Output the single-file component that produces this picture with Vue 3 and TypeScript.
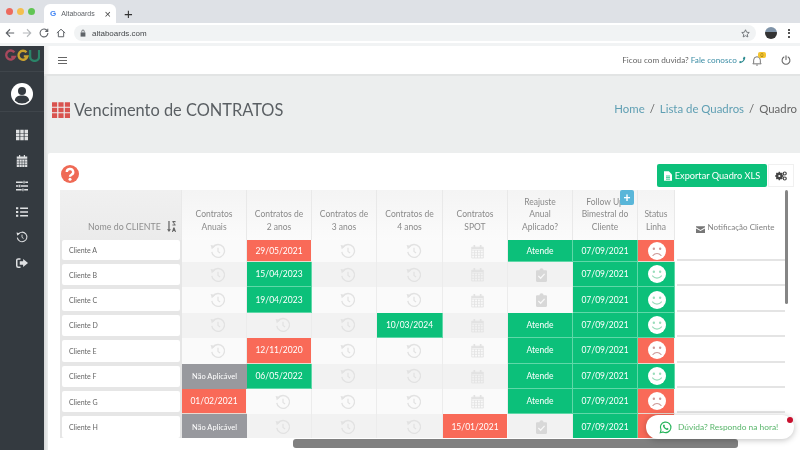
<script setup lang="ts">
type Cell =
  | { kind: 'hist' | 'cal' | 'check' }
  | { kind: 'fill'; tone: 'red' | 'green' | 'grey'; text: string }

interface Row {
  name: string
  cells: Cell[]
  follow: string
  happy: boolean
}

const hist: Cell = { kind: 'hist' }
const cal: Cell = { kind: 'cal' }
const check: Cell = { kind: 'check' }
const red = (text: string): Cell => ({ kind: 'fill', tone: 'red', text })
const green = (text: string): Cell => ({ kind: 'fill', tone: 'green', text })
const grey = (text: string): Cell => ({ kind: 'fill', tone: 'grey', text })
const atende = green('Atende')
const na = grey('Não Aplicável')

const headers = [
  'Contratos Anuais',
  'Contratos de 2 anos',
  'Contratos de 3 anos',
  'Contratos de 4 anos',
  'Contratos SPOT',
  'Reajuste Anual Aplicado?',
  'Follow Up Bimestral do Cliente',
  'Status Linha',
]

const rows: Row[] = [
  { name: 'Cliente A', cells: [hist, red('29/05/2021'), hist, hist, cal, atende], follow: '07/09/2021', happy: false },
  { name: 'Cliente B', cells: [hist, green('15/04/2023'), hist, hist, cal, check], follow: '07/09/2021', happy: true },
  { name: 'Cliente C', cells: [hist, green('19/04/2023'), hist, hist, cal, check], follow: '07/09/2021', happy: true },
  { name: 'Cliente D', cells: [hist, hist, hist, green('10/03/2024'), cal, atende], follow: '07/09/2021', happy: true },
  { name: 'Cliente E', cells: [hist, red('12/11/2020'), hist, hist, cal, atende], follow: '07/09/2021', happy: false },
  { name: 'Cliente F', cells: [na, green('06/05/2022'), hist, hist, cal, atende], follow: '07/09/2021', happy: true },
  { name: 'Cliente G', cells: [red('01/02/2021'), hist, hist, hist, cal, atende], follow: '07/09/2021', happy: false },
  { name: 'Cliente H', cells: [na, hist, hist, hist, red('15/01/2021'), check], follow: '07/09/2021', happy: false },
]

const sideIcons = ['i-grid', 'i-cal', 'i-sliders', 'i-list', 'i-hist', 'i-exit']
</script>

<template>
  <div class="screen">
    <svg class="defs" width="0" height="0" aria-hidden="true">
      <symbol id="i-grid" viewBox="0 0 16 14">
        <path fill="currentColor" d="M0 0h4.600v4.200H0zM5.700 0h4.600v4.200H5.700zM11.400 0H16v4.200h-4.600zM0 4.900h4.600v4.200H0zM5.700 4.900h4.600v4.200H5.700zM11.400 4.900H16v4.200h-4.600zM0 9.800h4.600V14H0zM5.700 9.800h4.600V14H5.700zM11.400 9.800H16V14h-4.600z" />
      </symbol>
      <symbol id="i-cal" viewBox="0 0 14 16">
        <path fill="currentColor" d="M3 0h1.600v2H3zM9.400 0H11v2H9.400zM0 2h14v3H0zM0 6h14v10H0z" />
        <path stroke="#343a40" stroke-width=".7" d="M3.500 6v10M7 6v10M10.500 6v10M0 9.300h14M0 12.600h14" />
      </symbol>
      <symbol id="i-sliders" viewBox="0 0 16 14">
        <path fill="currentColor" d="M0 1h16v2H0zM0 6h16v2H0zM0 11h16v2H0z" />
        <path fill="currentColor" stroke="#343a40" stroke-width=".8" d="M9.500 0h2.400v4H9.500zM3.500 5h2.400v4H3.500zM8 10h2.400v4H8z" />
      </symbol>
      <symbol id="i-list" viewBox="0 0 16 14">
        <path fill="currentColor" d="M5.500 1h10.500v2H5.500zM5.500 6h10.500v2H5.500zM5.500 11h10.500v2H5.500zM0 .6h3v2.800H0zM0 5.600h3v2.800H0zM0 10.600h3v2.800H0z" />
      </symbol>
      <symbol id="i-hist" viewBox="0 0 20 20">
        <path fill="none" stroke="currentColor" stroke-width="1.700" d="M3.500 5.400A8 8 0 1 1 2.200 11" />
        <path fill="currentColor" d="M.8 2.400l6 1.200-4.600 4.200z" />
        <path fill="none" stroke="currentColor" stroke-width="1.500" d="M10 6v4.600l2.600 1.800" />
      </symbol>
      <symbol id="i-exit" viewBox="0 0 16 14">
        <path fill="none" stroke="currentColor" stroke-width="2" d="M6 1.500H3a2 2 0 0 0-2 2v7a2 2 0 0 0 2 2h3" />
        <path fill="currentColor" d="M5 4.700h4.500V1.600L16 7l-6.500 5.400V9.300H5z" />
      </symbol>
      <symbol id="i-calendar-line" viewBox="0 0 18 20">
        <path fill="none" stroke="currentColor" stroke-width="1.200" d="M1 4h16v15H1zM1 8h16M5 8v11M9 8v11M13 8v11M1 11.700h16M1 15.300h16" />
        <path fill="currentColor" d="M3.500 1h2.300v4.500H3.500zM12.200 1h2.300v4.500h-2.300zM1 4h16v2.500H1z" />
      </symbol>
      <symbol id="i-clip" viewBox="0 0 16 20">
        <path fill="currentColor" d="M1.500 3H5a3 3 0 0 1 6 0h3.500A1.500 1.500 0 0 1 16 4.500v14a1.500 1.500 0 0 1-1.500 1.500h-13A1.500 1.500 0 0 1 0 18.500v-14A1.500 1.500 0 0 1 1.500 3z" />
        <path fill="none" stroke="#f8f8f8" stroke-width="1.800" d="M3.500 11.500l3.200 3.200 5.800-6.400" />
      </symbol>
      <symbol id="i-face-happy" viewBox="0 0 20 20">
        <circle cx="10" cy="10" r="10" fill="#fff" />
        <circle cx="6.500" cy="7.500" r="1.300" fill="currentColor" />
        <circle cx="13.500" cy="7.500" r="1.300" fill="currentColor" />
        <path fill="none" stroke="currentColor" stroke-width="1.300" stroke-linecap="round" d="M5 12.200c2.600 3.200 7.400 3.200 10 0" />
      </symbol>
      <symbol id="i-face-sad" viewBox="0 0 20 20">
        <circle cx="10" cy="10" r="10" fill="#fff" />
        <circle cx="6.500" cy="7.500" r="1.300" fill="currentColor" />
        <circle cx="13.500" cy="7.500" r="1.300" fill="currentColor" />
        <path fill="none" stroke="currentColor" stroke-width="1.300" stroke-linecap="round" d="M5.500 15c2.400-3 6.600-3 9 0" />
      </symbol>
    </svg>

    <div class="tabstrip">
      <div class="lights"><i class="l-red"></i><i class="l-yellow"></i><i class="l-green"></i></div>
      <div class="tab">
        <span class="g">G</span>
        <span class="tab-title">Altaboards</span>
        <span class="tab-x">×</span>
      </div>
      <span class="newtab">+</span>
    </div>

    <div class="toolbar">
      <svg class="nav" viewBox="0 0 12 12" width="10" height="10"><path fill="none" stroke="#5f6368" stroke-width="1.300" d="M11 6H2M6 1.500L1.500 6 6 10.500" /></svg>
      <svg class="nav" viewBox="0 0 12 12" width="10" height="10"><path fill="none" stroke="#b5b8bb" stroke-width="1.300" d="M1 6h9M6 1.500L10.500 6 6 10.500" /></svg>
      <svg class="nav" viewBox="0 0 12 12" width="10" height="10"><path fill="none" stroke="#5f6368" stroke-width="1.300" d="M10 3.500A4.700 4.700 0 1 0 10.700 6M10.500 1v3H7.500" /></svg>
      <svg class="nav" viewBox="0 0 12 12" width="10" height="10"><path fill="none" stroke="#5f6368" stroke-width="1.200" d="M1 6l5-4.500L11 6M2.800 5v5.500h6.400V5" /></svg>
      <div class="omnibox">
        <svg viewBox="0 0 10 12" width="6" height="8"><path fill="#5f6368" d="M1 5h8v7H1z" /><path fill="none" stroke="#5f6368" stroke-width="1.400" d="M3 5V3a2 2 0 0 1 4 0v2" /></svg>
        <span class="url">altaboards.com</span>
        <svg class="star" viewBox="0 0 12 12" width="9" height="9"><path fill="none" stroke="#5f6368" stroke-width="1.100" d="M6 1l1.500 3.300 3.500.4-2.600 2.400.7 3.500L6 8.900l-3.100 1.700.7-3.500L1 4.700l3.500-.4z" /></svg>
      </div>
      <div class="profile"></div>
      <div class="kebab"><i></i><i></i><i></i></div>
    </div>

    <div class="app">
      <aside class="sidebar">
        <div class="logo">
          <svg viewBox="0 0 40 14" width="36" height="13" fill="none" stroke-width="2.600">
            <path stroke="#a8485c" d="M11.500 3.500A5 5 0 1 0 12 8.500H8" />
            <path stroke="#c9a22f" d="M25 3.500A5 5 0 1 0 26 8h-4" />
            <path stroke="#2a8468" d="M29 1v7a5 5 0 0 0 10 0V1" />
          </svg>
        </div>
        <div class="avatar">
          <svg viewBox="0 0 22 22" width="22" height="22">
            <circle cx="11" cy="11" r="11" fill="#fff" />
            <circle cx="11" cy="8" r="4" fill="#343a40" />
            <path fill="#343a40" d="M3.800 17.500c.5-3.800 3.300-5 7.200-5s6.700 1.200 7.200 5a10 10 0 0 1-14.400 0z" />
          </svg>
        </div>
        <nav class="side-nav">
          <svg v-for="icon in sideIcons" :key="icon" class="side-icon"><use :href="'#' + icon" /></svg>
        </nav>
      </aside>

      <main class="main">
        <header class="topbar">
          <div class="burger"><i></i><i></i><i></i></div>
          <div class="top-right">
            <span class="ask">Ficou com duvida? <b>Fale conosco</b></span>
            <svg viewBox="0 0 12 12" width="7" height="8"><path fill="#2b8a8f" d="M11 1.500C10 7 7 10 1.500 11.500L0 9l3-1.500 1.200 1.200C5.800 7.800 7 6.500 7.700 5L6.500 3.800 8.500 0z" /></svg>
            <div class="bell">
              <svg viewBox="0 0 12 13" width="10" height="11"><path fill="none" stroke="#777" stroke-width="1.200" d="M2 9.500V6a4 4 0 0 1 8 0v3.500l1 1H1zM5 12h2" /></svg>
              <span class="bell-badge">0</span>
            </div>
            <svg class="power" viewBox="0 0 12 12" width="10" height="10"><path fill="none" stroke="#666" stroke-width="1.300" stroke-linecap="round" d="M3.500 2.500a4.700 4.700 0 1 0 5 0M6 .8v4.700" /></svg>
          </div>
        </header>

        <section class="pagehead">
          <h1>
            <svg class="title-icon"><use href="#i-grid" /></svg>
            Vencimento de CONTRATOS
          </h1>
          <div class="crumbs">
            <a>Home</a><span>/</span><a>Lista de Quadros</a><span>/</span><em>Quadro</em>
          </div>
        </section>

        <section class="content">
          <div class="actions">
            <svg class="help" viewBox="0 0 18 18" width="18" height="18">
              <circle cx="9" cy="9" r="9" fill="#ef6a55" />
              <path fill="none" stroke="#fff" stroke-width="2.400" d="M5.800 7a3.200 3 0 1 1 4.600 2.700C9.400 10.200 9 10.700 9 11.800" />
              <circle cx="9" cy="14.300" r="1.500" fill="#fff" />
            </svg>
            <button class="export">
              <svg viewBox="0 0 10 12" width="8" height="10"><path fill="#fff" d="M0 0h6l4 4v8H0z" /><path stroke="#0cc07a" d="M2.500 6h5M2.500 8h5M2.500 10h5" /></svg>
              Exportar Quadro XLS
            </button>
            <button class="gear">
              <svg viewBox="0 0 14 12" width="12" height="10"><circle cx="5" cy="6" r="3" fill="none" stroke="#444" stroke-width="2.200" /><path stroke="#444" stroke-width="1.600" d="M5 1v10M0 6h10M1.500 2.500l7 7M8.500 2.500l-7 7" /><circle cx="5" cy="6" r="1.300" fill="#fff" /><circle cx="11.500" cy="3" r="1.800" fill="none" stroke="#444" stroke-width="1.400" /><circle cx="11.500" cy="9" r="1.800" fill="none" stroke="#444" stroke-width="1.400" /></svg>
            </button>
          </div>

          <div class="board">
            <div class="grid">
              <div class="th th-name">
                <span>Nome do CLIENTE</span>
                <svg class="sort" viewBox="0 0 10 12" width="9" height="11"><path fill="#666" d="M1.500 0h1.400v9H4.400L2.200 12 0 9h1.500zM6 0h3.500v1.200H7.300L9.600 4v1H6V3.800h2.200L6 1z" /><path fill="#666" d="M7 7h1.400L10 12H8.800l-.3-1H7l-.3 1H5.500z" /></svg>
              </div>
              <div v-for="h in headers" :key="h" class="th">{{ h }}</div>
              <div class="th th-notif">
                <svg viewBox="0 0 12 9" width="9" height="7"><path fill="#777" d="M0 0h12v1.500L6 5 0 1.500zM0 3l6 3.500L12 3v6H0z" /></svg>
                Notificação Cliente
              </div>

              <template v-for="(row, r) in rows" :key="row.name">
                <div class="td td-name" :class="{ first: r === 0 }"><div class="name-card">{{ row.name }}</div></div>
                <div
                  v-for="(c, i) in row.cells"
                  :key="i"
                  class="td"
                  :class="[c.kind === 'fill' ? 'fill ' + c.tone : '', { alt: r % 2 === 1 }]"
                >
                  <template v-if="c.kind === 'fill'">{{ c.text }}</template>
                  <svg v-else-if="c.kind === 'hist'" class="ic ic-hist"><use href="#i-hist" /></svg>
                  <svg v-else-if="c.kind === 'cal'" class="ic ic-cal"><use href="#i-calendar-line" /></svg>
                  <svg v-else class="ic ic-clip"><use href="#i-clip" /></svg>
                </div>
                <div class="td fill green">{{ row.follow }}</div>
                <div class="td fill face" :class="row.happy ? 'green' : 'red'">
                  <svg class="ic-face"><use :href="row.happy ? '#i-face-happy' : '#i-face-sad'" /></svg>
                </div>
                <div class="td td-notif"></div>
              </template>
            </div>
            <button class="plus">+</button>
            <div class="vscroll"></div>
          </div>
          <div class="hscroll"></div>

          <div class="whats">
            <svg viewBox="0 0 16 16" width="13" height="13"><path fill="none" stroke="#25b45a" stroke-width="1.400" d="M1.500 14.500l1-3.500a6.500 6.500 0 1 1 2.500 2.500z" /><path fill="#25b45a" d="M5.500 4.500l1-.3.900 1.900-.6.800c.5 1 1.200 1.700 2.300 2.200l.8-.7 1.900 1-.4 1.100c-.6.500-1.500.6-2.400.2-2.100-.9-3.500-2.400-4.100-4.300-.2-.8 0-1.400.6-1.900z" /></svg>
            <span>Dúvida? Respondo na hora!</span>
            <i class="dot"></i>
          </div>
        </section>
      </main>
    </div>
  </div>
</template>

<style scoped>
.screen {
  position: relative;
  width: 800px;
  height: 450px;
  overflow: hidden;
  display: flex;
  flex-direction: column;
  background: #fff;
  font-family: Lato, "Liberation Sans", sans-serif;
  filter: blur(0.5px);
}
.defs {
  position: absolute;
}

.tabstrip {
  height: 23px;
  flex-shrink: 0;
  background: #dee1e6;
  display: flex;
  align-items: flex-end;
  padding-left: 6px;
}
.lights {
  display: flex;
  gap: 4px;
  align-self: center;
  width: 38px;
  margin-bottom: 1px;
}
.lights i {
  width: 7px;
  height: 7px;
  border-radius: 50%;
}
.l-red { background: #ed6a5e; }
.l-yellow { background: #f4bf4f; }
.l-green { background: #61c554; }
.tab {
  width: 72px;
  height: 19px;
  background: #fff;
  border-radius: 6px 6px 0 0;
  display: flex;
  align-items: center;
  gap: 5px;
  padding: 0 5px;
  box-sizing: border-box;
  font-family: "Liberation Sans", sans-serif;
  font-size: 7px;
  color: #5f6368;
}
.g {
  color: #4285f4;
  font-weight: 700;
  font-size: 8px;
  margin-left: 1px;
}
.tab-title {
  flex: 1;
}
.tab-x {
  font-size: 11px;
  color: #444;
}
.newtab {
  font-family: "Liberation Sans", sans-serif;
  font-size: 15px;
  line-height: 19px;
  margin-left: 8px;
  color: #333;
}

.toolbar {
  height: 20px;
  flex-shrink: 0;
  background: #fff;
  display: flex;
  align-items: center;
  padding-left: 5px;
  border-bottom: 3px solid #f1f3f4;
  gap: 7px;
}
.nav {
  flex-shrink: 0;
}
.omnibox {
  flex: 1;
  height: 16px;
  margin-left: 1px;
  border-radius: 8px;
  background: #f1f3f4;
  display: flex;
  align-items: center;
  padding: 0 3px 0 6px;
  gap: 6px;
}
.url {
  flex: 1;
  font-family: "Liberation Sans", sans-serif;
  font-size: 8px;
  color: #44474a;
}
.star {
  margin-right: 3px;
}
.profile {
  width: 12px;
  height: 12px;
  border-radius: 50%;
  background: linear-gradient(#7f93a8 40%, #333 40%);
  margin-left: 2px;
}
.kebab {
  display: flex;
  flex-direction: column;
  gap: 1.500px;
  margin: 0 10px 0 4px;
}
.kebab i {
  width: 2px;
  height: 2px;
  background: #555;
}

.app {
  flex: 1;
  display: flex;
  min-height: 0;
}
.sidebar {
  width: 44px;
  flex-shrink: 0;
  background: #343a40;
  display: flex;
  flex-direction: column;
  align-items: center;
}
.logo {
  height: 26px;
  width: 100%;
  display: flex;
  align-items: flex-start;
  justify-content: center;
  padding-top: 3px;
  box-sizing: border-box;
  border-bottom: 1px solid #3f454b;
}
.avatar {
  height: 40px;
  width: 100%;
  display: flex;
  align-items: center;
  justify-content: center;
  padding-top: 4px;
  box-sizing: border-box;
  border-bottom: 1px solid #3f454b;
}
.side-nav {
  display: flex;
  flex-direction: column;
  align-items: center;
  gap: 13.500px;
  padding-top: 17px;
  color: #dfe1e3;
}
.side-icon {
  width: 12px;
  height: 12px;
}

.main {
  flex: 1;
  display: flex;
  flex-direction: column;
  min-width: 0;
  background: linear-gradient(90deg, #d6d8d9, #eceeee 4px);
}
.topbar {
  height: 28px;
  flex-shrink: 0;
  background: linear-gradient(90deg, #ececec, #fff 6px);
  display: flex;
  align-items: center;
  padding-left: 14px;
  box-sizing: border-box;
}
.burger {
  display: flex;
  flex-direction: column;
  gap: 2px;
}
.burger i {
  width: 9px;
  height: 1px;
  background: #666;
}
.top-right {
  margin-left: auto;
  display: flex;
  align-items: center;
  gap: 2px;
  padding-right: 9px;
}
.ask {
  font-size: 8.200px;
  color: #666;
}
.ask b {
  font-weight: 400;
  color: #3d8ea6;
}
.bell {
  position: relative;
  display: flex;
  margin: 0 17px 0 4px;
}
.bell-badge {
  position: absolute;
  left: 6px;
  top: -3px;
  width: 8px;
  height: 6px;
  background: #f4c430;
  border-radius: 2px;
  color: #8a6d10;
  font-size: 5px;
  line-height: 6px;
  text-align: center;
}

.pagehead {
  height: 79px;
  flex-shrink: 0;
  display: flex;
  align-items: flex-start;
  justify-content: space-between;
  padding: 22px 3px 0 8px;
  box-sizing: border-box;
  border-top: 2px solid #e2e4e4;
}
h1 {
  margin: 0;
  display: flex;
  align-items: center;
  gap: 4px;
  font-family: Lato, sans-serif;
  font-weight: 400;
  font-size: 16.400px;
  line-height: 24px;
  color: #5a5f63;
}
.title-icon {
  width: 18px;
  height: 16px;
  color: #d9534f;
}
.crumbs {
  display: flex;
  gap: 5px;
  font-family: Lato, sans-serif;
  font-size: 11.400px;
  line-height: 22px;
  color: #666;
}
.crumbs a {
  color: #5f9fb3;
}
.crumbs em {
  font-style: normal;
}

.content {
  position: relative;
  flex: 1;
  min-height: 0;
  margin-left: 4px;
  background: #fff;
  padding: 11px 0 0 12px;
  border-top-left-radius: 2px;
}
.actions {
  display: flex;
  align-items: center;
  height: 23px;
  margin-bottom: 3px;
}
.help {
  margin-left: 1px;
  margin-top: -4px;
}
.export {
  margin-left: auto;
  width: 110px;
  height: 23px;
  border: 0;
  border-radius: 2px;
  background: #0cc07a;
  color: #fff;
  font-family: Lato, sans-serif;
  font-size: 9.200px;
  display: flex;
  align-items: center;
  justify-content: center;
  gap: 3px;
  padding: 0;
}
.gear {
  width: 26px;
  height: 23px;
  margin: 0 6px 0 1px;
  border: 1px solid #f0f0f0;
  background: #fff;
  display: flex;
  align-items: center;
  justify-content: center;
  padding: 0;
}

.board {
  position: relative;
  width: 728px;
  height: 248px;
  overflow: hidden;
}
.grid {
  display: grid;
  grid-template-columns: 122px 65px 65px 65px 66px 65px 65px 65px 37px 110px;
  grid-template-rows: 50px 22px repeat(7, 25.400px);
}
.th {
  background: linear-gradient(#f4f4f4, #fbfbfb);
  border-right: 1px solid #e9e9e9;
  box-sizing: border-box;
  display: flex;
  align-items: flex-end;
  justify-content: center;
  text-align: center;
  padding: 0 6px 7px;
  font-size: 8.500px;
  line-height: 12.500px;
  color: #8a8a8a;
}
.th-name {
  background: linear-gradient(#f0f0f0, #ebebeb);
  justify-content: flex-start;
  padding: 0 5px 7px 28px;
  color: #8e8e8e;
  font-size: 8.800px;
  white-space: nowrap;
}
.sort {
  margin-left: auto;
  margin-bottom: 1px;
}
.th-notif {
  background: #fff;
  border-right: 0;
  gap: 3px;
  padding: 0 0 7px 10px;
  align-items: flex-end;
  color: #808080;
  font-size: 8px;
  white-space: nowrap;
}
.td {
  background: #fafafa;
  box-sizing: border-box;
  border-right: 1px solid #ececec;
  display: flex;
  align-items: center;
  justify-content: center;
  font-size: 8.500px;
  color: #fff;
}
.td.alt {
  background: #f2f2f2;
}
.td.green {
  background: #0cc07a;
  border-right: 1px solid #5fd8a8;
  border-bottom: 1px solid #5fd8a8;
}
.td.red {
  background: #f96a58;
  border-right: 1px solid #f8f8f8;
  border-bottom: 1px solid #e9d9d0;
}
.td.grey {
  background: #98999e;
  border-right: 0;
  font-size: 7.500px;
}
.td-name {
  background: #e6e6e6;
  border-right: 0;
  padding: 2px;
}
.td-name.first {
  padding-top: 0;
}
.name-card {
  width: 100%;
  height: 100%;
  background: #fff;
  border-radius: 2px;
  display: flex;
  align-items: center;
  padding-left: 7px;
  box-sizing: border-box;
  color: #666;
  font-size: 7px;
}
.td-notif {
  background: #fff;
  border-right: 0;
  border-bottom: 2px solid #e4e4e4;
  margin-bottom: 1px;
  margin-left: 2px;
}
.ic {
  color: #e2e2e2;
}
.ic-hist {
  width: 16px;
  height: 16px;
  margin-left: 8px;
}
.ic-cal {
  width: 13px;
  height: 15px;
  margin-left: 4px;
}
.ic-clip {
  width: 11px;
  height: 14px;
  margin-left: 2px;
  color: #d8d8d8;
}
.ic-face {
  width: 18px;
  height: 18px;
  margin-left: 2px;
  color: #9db;
}
.face.red .ic-face {
  color: #c99;
}
.plus {
  position: absolute;
  left: 560px;
  top: 0;
  width: 14px;
  height: 15px;
  border: 0;
  border-radius: 2px;
  padding: 0;
  background: #59b6d9;
  color: #fff;
  font-size: 12px;
  line-height: 14px;
  font-weight: 700;
}
.vscroll {
  position: absolute;
  right: 0;
  top: 0;
  width: 3px;
  height: 114px;
  background: #858585;
  border-radius: 2px;
}
.hscroll {
  position: absolute;
  left: 245px;
  top: 286px;
  width: 445px;
  height: 9px;
  background: #808080;
  border-radius: 3px;
}
.whats {
  position: absolute;
  left: 598px;
  top: 262px;
  width: 148px;
  height: 24px;
  background: #fff;
  border-radius: 12px;
  box-shadow: 0 1px 6px rgba(0, 0, 0, 0.25);
  display: flex;
  align-items: center;
  gap: 6px;
  padding-left: 13px;
  box-sizing: border-box;
  color: #58b56a;
  font-size: 8.400px;
  white-space: nowrap;
}
.dot {
  position: absolute;
  right: 1px;
  top: 2px;
  width: 6px;
  height: 6px;
  border-radius: 50%;
  background: #c8102e;
}
</style>
